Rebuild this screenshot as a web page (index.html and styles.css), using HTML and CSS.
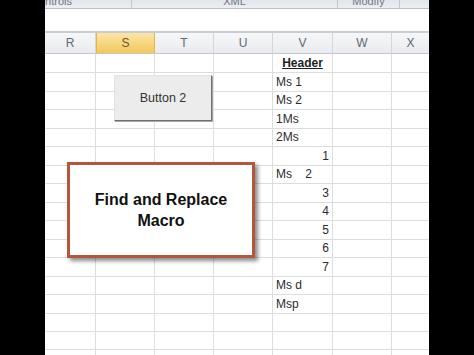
FILE: index.html
```html
<!DOCTYPE html>
<html>
<head>
<meta charset="utf-8">
<link rel="stylesheet" href="styles.css">
</head>
<body>
<div class="screen">
  <div class="sheet">
    <div class="ribbon">
      <div class="group g-controls"><span class="label">Controls</span></div>
      <div class="group g-xml"><span class="label">XML</span></div>
      <div class="group g-modify"><span class="label">Modify</span></div>
      <div class="group g-rest"></div>
    </div>
    <div class="formula"></div>
    <div class="cols">
      <div class="ch">R</div><div class="ch sel">S</div><div class="ch">T</div><div class="ch">U</div><div class="ch">V</div><div class="ch">W</div><div class="ch last">X</div>
    </div>
    <div class="grid">
      <div class="row"><span></span><span></span><span></span><span></span><span class="v hd">Header</span><span></span><span></span></div>
      <div class="row"><span></span><span></span><span></span><span></span><span class="v">Ms 1</span><span></span><span></span></div>
      <div class="row"><span></span><span></span><span></span><span></span><span class="v">Ms 2</span><span></span><span></span></div>
      <div class="row"><span></span><span></span><span></span><span></span><span class="v">1Ms</span><span></span><span></span></div>
      <div class="row"><span></span><span></span><span></span><span></span><span class="v">2Ms</span><span></span><span></span></div>
      <div class="row"><span></span><span></span><span></span><span></span><span class="v num">1</span><span></span><span></span></div>
      <div class="row"><span></span><span></span><span></span><span></span><span class="v pre">Ms    2</span><span></span><span></span></div>
      <div class="row"><span></span><span></span><span></span><span></span><span class="v num">3</span><span></span><span></span></div>
      <div class="row"><span></span><span></span><span></span><span></span><span class="v num">4</span><span></span><span></span></div>
      <div class="row"><span></span><span></span><span></span><span></span><span class="v num">5</span><span></span><span></span></div>
      <div class="row"><span></span><span></span><span></span><span></span><span class="v num">6</span><span></span><span></span></div>
      <div class="row"><span></span><span></span><span></span><span></span><span class="v num">7</span><span></span><span></span></div>
      <div class="row"><span></span><span></span><span></span><span></span><span class="v">Ms d</span><span></span><span></span></div>
      <div class="row"><span></span><span></span><span></span><span></span><span class="v">Msp</span><span></span><span></span></div>
      <div class="row"><span></span><span></span><span></span><span></span><span class="v"></span><span></span><span></span></div>
      <div class="row"><span></span><span></span><span></span><span></span><span class="v"></span><span></span><span></span></div>
      <div class="row"><span></span><span></span><span></span><span></span><span class="v"></span><span></span><span></span></div>
    </div>
    <div class="button2">Button 2</div>
    <div class="macro-box">Find and Replace<br>Macro</div>
  </div>
</div>
</body>
</html>
```
FILE: styles.css
```css
* { box-sizing: border-box; }
html, body { margin: 0; padding: 0; }
body {
  background: #000;
  width: 474px;
  height: 355px;
  overflow: hidden;
  font-family: "Liberation Sans", Arial, sans-serif;
}
.screen {
  display: flex;
  height: 355px;
  padding-left: 45px;
}
.sheet {
  position: relative;
  width: 384px;
  height: 355px;
  background: #fff;
  overflow: hidden;
}
.ribbon {
  display: flex;
  height: 9px;
  background: linear-gradient(#e2e6eb, #eceef1);
  border-bottom: 1px solid #b9bec6;
  overflow: hidden;
}
.group {
  display: flex;
  justify-content: center;
  border-right: 1px solid #c3c8cf;
  flex: none;
}
.g-controls { width: 87px; margin-left: 0; justify-content: flex-start; padding-left: 0; }
.g-controls .label { margin-left: -14px; }
.g-xml { width: 206px; }
.g-modify { width: 62px; }
.g-rest { width: 29px; border-right: none; }
.label {
  font-size: 11px;
  line-height: 11px;
  margin-top: -4px;
  color: #6d7683;
  white-space: nowrap;
}
.formula {
  height: 24px;
  background: #fff;
  border-bottom: 2px solid #c9cdd3;
}
.cols {
  display: grid;
  grid-template-columns: 51px 59px 59px 59px 60px 59px 37px;
  height: 21px;
  background: linear-gradient(#f6f7f8, #e9ebee);
  border-bottom: 1px solid #c4c8ce;
}
.ch {
  display: flex;
  align-items: center;
  justify-content: center;
  font-size: 12px;
  color: #5f6874;
  border-right: 1px solid #d3d6db;
}
.ch.last { border-right: none; }
.ch.sel {
  background: linear-gradient(#fbe6a6, #f4c75a);
  color: #6b5a2a;
  border-right: 1px solid #e0b550;
  border-left: 1px solid #e0b550;
}
.grid { display: flex; flex-direction: column; }
.row {
  display: grid;
  grid-template-columns: 51px 59px 59px 59px 60px 59px 37px;
  height: 18.5px;
  flex: none;
}
.row span {
  border-right: 1px solid #dcdddf;
  border-bottom: 1px solid #dcdddf;
  font-size: 12px;
  line-height: 17px;
  color: #2b2b2b;
  padding: 1px 3px 0;
  white-space: nowrap;
  overflow: visible;
}
.row span:last-child { border-right: none; }
.row .hd { font-weight: bold; text-decoration: underline; text-align: center; color: #1e1e1e; }
.row .num { text-align: right; }
.row .pre { white-space: pre; }
.button2 {
  position: absolute;
  left: 69px;
  top: 75px;
  width: 98px;
  height: 46px;
  background: #ececec;
  border-top: 1px solid #e2e2e2;
  border-left: 1px solid #e2e2e2;
  border-right: 1px solid #6f6f6f;
  border-bottom: 1px solid #6f6f6f;
  box-shadow: 1px 1px 0 #a8a8a8;
  display: flex;
  align-items: center;
  justify-content: center;
  font-size: 12.5px;
  color: #333;
}
.macro-box {
  position: absolute;
  left: 22px;
  top: 162px;
  width: 188px;
  height: 96px;
  background: #fff;
  border: 3px solid #b4553d;
  box-shadow: 3px 3px 4px rgba(0,0,0,0.45);
  display: flex;
  align-items: center;
  justify-content: center;
  text-align: center;
  font-weight: bold;
  font-size: 16px;
  line-height: 21px;
  color: #111;
}
```
